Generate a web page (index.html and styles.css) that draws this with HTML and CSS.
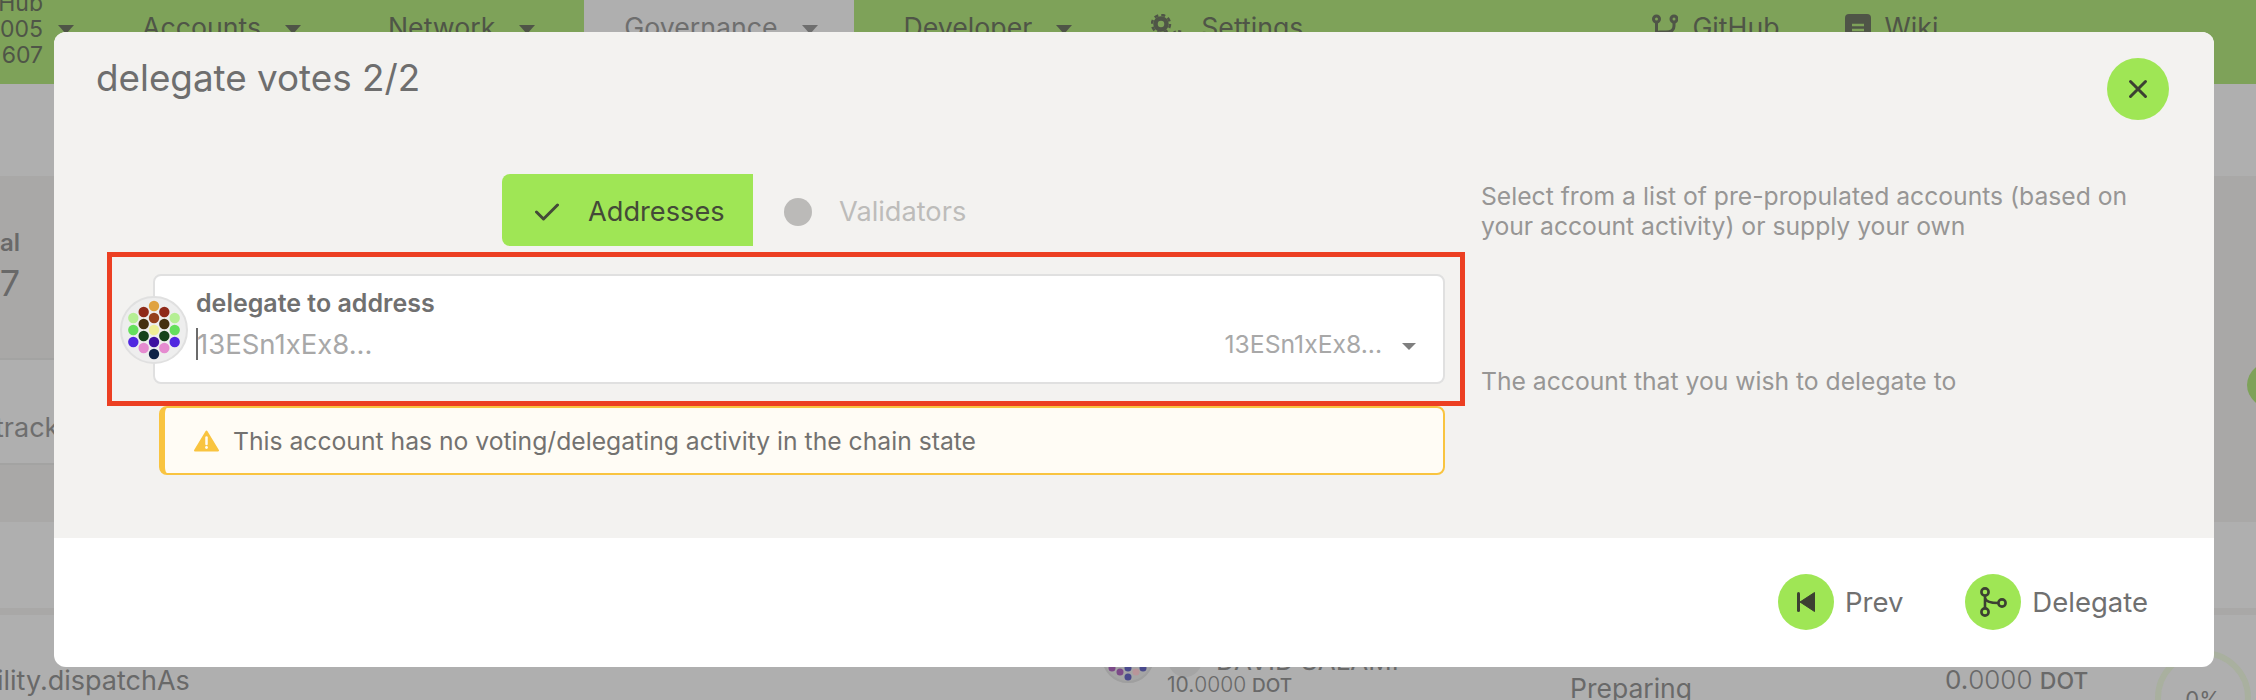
FILE: index.html
```html
<!DOCTYPE html>
<html lang="en">
<head>
<meta charset="utf-8">
<title>delegate votes</title>
<link rel="stylesheet" href="styles.css">
</head>
<body>
<div class="page">
  <nav class="nav">
    <div class="chain"><span>Hub</span><span>0005</span><span>607</span></div>
    <i class="tri chain-tri"></i>
    <a class="nav-item accounts">Accounts<i class="tri"></i></a>
    <a class="nav-item network">Network<i class="tri"></i></a>
    <a class="nav-item governance">Governance<i class="tri"></i></a>
    <a class="nav-item developer">Developer<i class="tri"></i></a>
    <a class="nav-item settings">
      <svg class="nav-icon cogs" viewBox="0 0 36 36"><circle cx="10" cy="10" r="5.5" fill="none" stroke="currentColor" stroke-width="4.5"/><circle cx="10" cy="10" r="9" fill="none" stroke="currentColor" stroke-width="2.5" stroke-dasharray="4 3.07"/><circle cx="27" cy="24" r="4" fill="none" stroke="currentColor" stroke-width="3.5"/><circle cx="27" cy="24" r="7" fill="none" stroke="currentColor" stroke-width="2" stroke-dasharray="3 2.5"/></svg>
      Settings</a>
    <a class="nav-item github">
      <svg class="nav-icon branch" viewBox="0 0 26 36"><g fill="none" stroke="currentColor" stroke-width="3"><circle cx="4.5" cy="5" r="3"/><circle cx="22" cy="5" r="3"/><circle cx="4.5" cy="31" r="3"/><path d="M4.500 8V28M22 8V12Q22 18 14 18H8Q4.500 18 4.500 22"/></g></svg>
      GitHub</a>
    <a class="nav-item wiki">
      <svg class="nav-icon book" viewBox="0 0 26 36"><rect width="26" height="36" rx="4" fill="currentColor"/><path d="M7 11H19M7 16H19" stroke="#7ea259" stroke-width="2.500"/></svg>
      Wiki</a>
  </nav>
  <div class="spacer"></div>
  <section class="panel">
    <div class="stat"><span class="stat-label">al</span><span class="stat-value">7</span></div>
  </section>
  <section class="track-row">
    <div class="track-cell"><span class="track-text">track</span></div>
    <span class="track-badge"></span>
  </section>
  <div class="band"></div>
  <div class="blank"></div>
  <div class="divider"></div>
  <section class="referendum">
    <div class="ref-name">ility.dispatchAs</div>
    <div class="ref-owner">
      <svg class="owner-avatar" viewBox="0 0 52 52"><circle cx="26" cy="26" r="25" fill="#a5a5a5" stroke="#9f9f9f" stroke-width="2"/><circle cx="10" cy="37" r="3.500" fill="#7c4a88"/><circle cx="18" cy="41" r="3.500" fill="#7c4a88"/><circle cx="26" cy="37" r="3.500" fill="#4a4a8c"/><circle cx="34" cy="41" r="3.500" fill="#b8959a"/><circle cx="41" cy="37" r="3.500" fill="#4a4a8c"/><circle cx="26" cy="46" r="3.500" fill="#4a4a8c"/></svg>
      <div class="owner-info">
        <div class="owner-top">
          <span class="owner-blob"></span>
          <span class="owner-name">DAVID SALAMI</span>
        </div>
        <div class="amount small"><b>10.</b>0000 <em>DOT</em></div>
      </div>
    </div>
    <div class="ref-status">Preparing</div>
    <div class="amount large"><b>0.</b>0000 <em>DOT</em></div>
    <div class="ring"><span>0%</span></div>
  </section>
</div>

<div class="modal">
  <div class="modal-body">
    <header class="modal-head">
      <h1 class="modal-title">delegate votes 2/2</h1>
      <button class="round close" type="button" aria-label="Close">
        <svg viewBox="0 0 20 20"><path d="M2.500 2.500L17.500 17.500M17.500 2.500L2.500 17.500" fill="none" stroke="currentColor" stroke-width="3" stroke-linecap="round"/></svg>
      </button>
    </header>
    <div class="form-row">
      <div class="steps">
        <div class="step done">
          <svg class="check" viewBox="0 0 24 18"><path d="M1.500 9L8.500 16L22.500 2" fill="none" stroke="currentColor" stroke-width="3" stroke-linecap="round" stroke-linejoin="round"/></svg>
          Addresses
        </div>
        <div class="step todo"><span class="dot"></span>Validators</div>
      </div>
      <p class="help">Select from a list of pre-propulated accounts (based on your account activity) or supply your own</p>
    </div>
    <div class="form-row address-row">
      <div class="address-col">
        <div class="address">
          <svg class="identicon" viewBox="0 0 68 68">
            <circle cx="34" cy="34" r="33" fill="#eeeeee" stroke="#e0e0e0" stroke-width="2"/>
            <circle cx="34" cy="10" r="5.200" fill="#e0a23f"/>
            <circle cx="23.700" cy="16" r="5.200" fill="#8f2a1a"/><circle cx="44.300" cy="16" r="5.200" fill="#8f2a1a"/>
            <circle cx="34" cy="22" r="5.200" fill="#95401c"/>
            <circle cx="13.300" cy="22" r="5.200" fill="#b5ef94"/><circle cx="54.700" cy="22" r="5.200" fill="#b5ef94"/>
            <circle cx="23.700" cy="28" r="5.200" fill="#44300f"/><circle cx="44.300" cy="28" r="5.200" fill="#44300f"/>
            <circle cx="34" cy="34" r="5.200" fill="#efee96"/>
            <circle cx="13.300" cy="34" r="5.200" fill="#65df5c"/><circle cx="54.700" cy="34" r="5.200" fill="#65df5c"/>
            <circle cx="23.700" cy="40" r="5.200" fill="#15421a"/><circle cx="44.300" cy="40" r="5.200" fill="#15421a"/>
            <circle cx="34" cy="46" r="5.200" fill="#3e10a0"/>
            <circle cx="13.300" cy="46" r="5.200" fill="#5027e0"/><circle cx="54.700" cy="46" r="5.200" fill="#5027e0"/>
            <circle cx="23.700" cy="52" r="5.200" fill="#e58bd0"/><circle cx="44.300" cy="52" r="5.200" fill="#e58bd0"/>
            <circle cx="34" cy="58" r="5.200" fill="#0f2347"/>
          </svg>
          <div class="address-main">
            <label class="address-label">delegate to address</label>
            <div class="address-input"><span class="caret"></span>13ESn1xEx8...</div>
          </div>
          <div class="address-selected">13ESn1xEx8...<i class="tri tri-small"></i></div>
        </div>
        <div class="warning">
          <svg class="warn-icon" viewBox="0 0 25 22"><path d="M12.500 1.500L24 20.500H1Z" fill="currentColor" stroke="currentColor" stroke-width="2" stroke-linejoin="round"/><path d="M12.500 7.500V14" stroke="#fffcf5" stroke-width="2.500" stroke-linecap="round"/><circle cx="12.500" cy="17.500" r="1.400" fill="#fffcf5"/></svg>
          This account has no voting/delegating activity in the chain state
        </div>
      </div>
      <p class="help help-address">The account that you wish to delegate to</p>
    </div>
  </div>
  <footer class="modal-foot">
    <button class="action" type="button">
      <span class="round">
        <svg viewBox="0 0 18 20"><path d="M1.500 1.500V18.500" stroke="currentColor" stroke-width="3" stroke-linecap="round"/><path d="M17.500 0.500V19.500L3 10Z" fill="currentColor" stroke="currentColor" stroke-linejoin="round"/></svg>
      </span>Prev
    </button>
    <button class="action" type="button">
      <span class="round">
        <svg viewBox="0 0 56 56"><g fill="none" stroke="currentColor" stroke-width="2.600"><circle cx="20" cy="18" r="3.600"/><circle cx="20" cy="38" r="3.600"/><circle cx="37" cy="29" r="3.600"/><path d="M20 21.600V34.400M20 24Q21 29 33.400 29"/></g></svg>
      </span>Delegate
    </button>
  </footer>
  <div class="highlight"></div>
</div>
</body>
</html>
```

FILE: styles.css
```css
* { box-sizing: border-box; }
html, body { margin: 0; height: 700px; overflow: hidden; }
body { font-family: Inter, "Liberation Sans", sans-serif; background: #afafaf; color: #6e6e6e; position: relative; }
.page { width: 2256px; height: 700px; overflow: hidden; }

/* nav */
.nav { display: flex; align-items: flex-start; height: 84px; background: #7ea259; color: #4f5547; font-size: 26.700px; line-height: 28px; }
.chain { flex: 0 0 43px; min-width: 0; margin-top: -10px; display: flex; flex-direction: column; align-items: flex-end; white-space: nowrap; font-size: 23px; line-height: 26px; }
.nav-item { display: flex; align-items: flex-start; height: 84px; padding-top: 13px; white-space: nowrap; }
.tri { display: inline-block; flex: none; width: 0; height: 0; border-left: 8.500px solid transparent; border-right: 8.500px solid transparent; border-top: 9px solid currentColor; }
.chain-tri { margin: 25px 0 0 15px; }
.nav-item .tri { margin: 12px 0 0 24px; }
.accounts { margin-left: 68px; }
.network { margin-left: 87px; }
.governance { margin-left: 49px; padding: 13px 36px 0 40px; background: #afafaf; color: #6e6e6e; }
.developer { margin-left: 50px; }
.settings { margin-left: 79px; }
.github { margin-left: 349px; }
.wiki { margin-left: 65px; }
.nav-icon { flex: none; margin: 1px 14px 0 0; height: 36px; }
.cogs { width: 36px; }
.branch, .book { width: 26px; }

/* dimmed page behind the dialog */
.spacer { height: 92px; }
.panel { height: 182px; background: #a9a8a7; padding-top: 52px; }
.stat { display: flex; flex-direction: column; align-items: flex-end; width: 20px; font-size: 24px; line-height: 30px; color: #696969; white-space: nowrap; }
.stat-value { font-size: 36px; line-height: 42px; margin-top: 4px; }
.stat-label { font-weight: 600; }
.track-row { display: flex; justify-content: space-between; height: 107px; background: #a9a8a7; }
.track-cell { width: 54px; background: #afafaf; border-top: 2px solid #a3a3a2; border-bottom: 2px solid #a3a3a2; padding-top: 53px; font-size: 27px; line-height: 30px; white-space: nowrap; }
.track-text { margin-left: -5px; }
.track-badge { width: 60px; height: 50px; margin: 2px -51px 0 0; border-radius: 50%; background: #7ea259; }
.band { height: 57px; background: #a9a8a7; }
.blank { height: 86px; }
.divider { height: 7px; background: #a9a8a7; }
.referendum { display: grid; grid-template-columns: 1102px 468px 375px 210px auto; height: 85px; color: #696969; }
.ref-name { margin: 50px 0 0 -3px; font-size: 27px; line-height: 32px; white-space: nowrap; }
.ref-owner { display: flex; align-items: flex-start; }
.owner-avatar { width: 52px; height: 52px; flex: none; margin-top: 16px; }
.owner-info { margin: 31px 0 0 13px; }
.owner-top { display: flex; align-items: flex-start; height: 26px; margin-left: 1px; }
.owner-blob { width: 34px; height: 34px; border-radius: 50%; background: #a5a5a5; margin-top: -3px; flex: none; }
.owner-name { margin-left: 14px; font-size: 26px; line-height: 30px; white-space: nowrap; }
.amount { white-space: nowrap; font-weight: 300; }
.amount b { font-weight: 400; }
.amount em { font-style: normal; font-weight: 500; }
.amount.small { font-size: 21px; line-height: 26px; }
.amount.small em { font-size: 19px; }
.amount.large { font-size: 26px; line-height: 30px; margin-top: 50px; }
.amount.large em { font-size: 23px; }
.ref-status { margin-top: 58px; font-size: 26.500px; line-height: 30px; }
.ring { width: 96px; height: 96px; margin-top: 35px; border: 6px solid #a9b09f; border-radius: 50%; display: flex; justify-content: center; padding-top: 30px; font-size: 22px; line-height: 26px; }

/* dialog */
.modal { position: absolute; left: 54px; top: 32px; width: 2160px; height: 635px; border-radius: 12px; background: #fff; display: flex; flex-direction: column; overflow: hidden; }
.modal-body { flex: 0 0 506px; background: #f3f2f0; }
.modal-head { display: flex; justify-content: space-between; align-items: flex-start; height: 142px; padding: 26px 45px 0 42px; }
.modal-title { margin: -2px 0 0; font-size: 36.800px; line-height: 44px; font-weight: 400; color: #6e6e6e; }
.round { display: flex; align-items: center; justify-content: center; flex: none; border: 0; padding: 0; border-radius: 50%; background: #9fe655; color: #3c4032; }
.close { width: 62px; height: 62px; }
.close svg { width: 20px; height: 20px; }
.form-row { display: flex; padding-left: 99px; }
.steps { flex: 0 0 1292px; display: flex; align-items: center; height: 72px; padding-left: 349px; font-size: 27.200px; }
.step { display: flex; align-items: center; padding-top: 3px; }
.done { width: 251px; height: 72px; padding-left: 33px; background: #9fe655; border-radius: 8px 0 0 8px; color: #444a38; }
.check { width: 24px; height: 18px; margin-right: 29px; }
.todo { color: #bdbcba; margin-left: 31px; }
.dot { width: 28px; height: 28px; margin-right: 27px; border-radius: 50%; background: #bbbab8; }
.help { margin: 0 0 0 36px; width: 660px; font-size: 24.700px; line-height: 30px; color: #979695; }
.steps + .help { margin-top: 7px; }
.address-row { margin-top: 28px; }
.address-col { flex: 0 0 1292px; }
.address { position: relative; display: flex; justify-content: space-between; height: 110px; background: #fff; border: 2px solid #e0e0e0; border-radius: 8px; padding: 13px 27px 0 41px; }
.identicon { position: absolute; left: -35px; top: 20px; width: 68px; height: 68px; }
.address-label { display: block; font-size: 25px; line-height: 28px; font-weight: 600; color: #707070; }
.address-input { display: flex; align-items: center; margin-top: 10px; font-size: 27.500px; line-height: 34px; color: #a8a8a8; }
.caret { width: 2px; height: 32px; background: #6b6b6b; margin-right: -1px; }
.address-selected { display: flex; align-items: center; align-self: flex-start; margin-top: 38px; font-size: 24.700px; line-height: 34px; color: #a8a8a8; }
.tri-small { margin-left: 20px; margin-top: 4px; border-left-width: 7px; border-right-width: 7px; border-top-width: 7px; color: #7f7f7f; }
.warning { display: flex; align-items: center; height: 69px; margin: 22px 0 0 6px; padding-left: 29px; background: #fffcf5; border: 2px solid #f9c440; border-left-width: 6px; border-radius: 8px; font-size: 24.700px; color: #737270; }
.warn-icon { width: 25px; height: 22px; margin-right: 14px; color: #f9c440; }
.help-address { margin-top: 92px; }
.modal-foot { flex: 1; display: flex; justify-content: flex-end; gap: 62px; padding: 36px 66px 0 0; }
.action { display: flex; align-items: center; align-self: flex-start; gap: 11px; border: 0; padding: 0; background: none; font: inherit; font-size: 27.500px; color: #707070; }
.action .round { width: 56px; height: 56px; }
.action .round svg { width: 100%; height: 100%; }
.action:first-child .round svg { width: 18px; height: 20px; }
.highlight { position: absolute; left: 53px; top: 220px; width: 1358px; height: 154px; border: 5px solid #ec3f22; pointer-events: none; }
```
